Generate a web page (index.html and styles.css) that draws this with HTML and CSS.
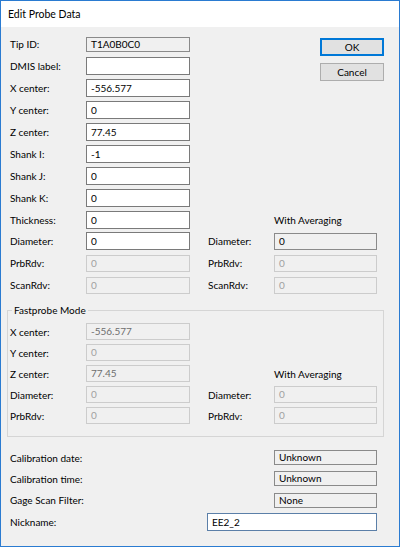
FILE: index.html
```html
<!DOCTYPE html>
<html>
<head>
<meta charset="utf-8">
<link rel="stylesheet" href="styles.css">
</head>
<body>
<div class="window">
  <div class="titlebar">Edit Probe Data</div>
  <div class="grid top">
    <div class="lbl">Tip ID:</div><div class="box static">T1A0B0C0</div>
    <div class="buttons">
      <div class="btn default">OK</div>
      <div class="btn">Cancel</div>
    </div>
    <div class="lbl">DMIS label:</div><div class="box edit"></div>
    <div class="lbl">X center:</div><div class="box edit">-556.577</div>
    <div class="lbl">Y center:</div><div class="box edit">0</div>
    <div class="lbl">Z center:</div><div class="box edit">77.45</div>
    <div class="lbl">Shank I:</div><div class="box edit">-1</div>
    <div class="lbl">Shank J:</div><div class="box edit">0</div>
    <div class="lbl">Shank K:</div><div class="box edit">0</div>
    <div class="lbl">Thickness:</div><div class="box edit">0</div>
    <div class="caption">With Averaging</div>
    <div class="lbl">Diameter:</div><div class="box edit">0</div>
    <div class="lbl c4">Diameter:</div><div class="box static tall">0</div>
    <div class="lbl">PrbRdv:</div><div class="box disabled">0</div>
    <div class="lbl c4">PrbRdv:</div><div class="box disabled">0</div>
    <div class="lbl">ScanRdv:</div><div class="box disabled">0</div>
    <div class="lbl c4">ScanRdv:</div><div class="box disabled">0</div>
  </div>

  <fieldset class="group">
    <legend>Fastprobe Mode</legend>
    <div class="grid fast">
      <div class="lbl">X center:</div><div class="box ro">-556.577</div>
      <div class="lbl">Y center:</div><div class="box disabled">0</div>
      <div class="lbl">Z center:</div><div class="box ro">77.45</div>
      <div class="caption">With Averaging</div>
      <div class="lbl">Diameter:</div><div class="box disabled">0</div>
      <div class="lbl c4">Diameter:</div><div class="box disabled">0</div>
      <div class="lbl">PrbRdv:</div><div class="box disabled">0</div>
      <div class="lbl c4">PrbRdv:</div><div class="box disabled">0</div>
    </div>
  </fieldset>

  <div class="grid bottom">
    <div class="lbl wide">Calibration date:</div><div class="box static c5">Unknown</div>
    <div class="lbl wide">Calibration time:</div><div class="box static c5">Unknown</div>
    <div class="lbl wide">Gage Scan Filter:</div><div class="box static c5">None</div>
    <div class="lbl wide">Nickname:</div><div class="box nick">EE2_2</div>
  </div>
</div>
</body>
</html>
```

FILE: styles.css
```css
* { box-sizing: border-box; }
html, body { margin: 0; padding: 0; background: #f0f0f0; }
body {
  font-family: Lato, "Liberation Sans", sans-serif;
  font-size: 10px;
  color: #000;
}
.window {
  width: 400px;
  height: 547px;
  border: 1px solid #2a7bd1;
  background: #f0f0f0;
  overflow: hidden;
}
.titlebar {
  height: 26px;
  line-height: 26px;
  background: #fff;
  padding-left: 7px;
  font-size: 10.5px;
}
.grid {
  display: grid;
  grid-template-columns: 76px 104px 18px 66px 103px 7px;
  padding-left: 9px;
  align-items: center;
}
.top {
  padding-top: 6px;
  grid-template-rows: repeat(8, 22px) 21px repeat(3, 22px);
}
.lbl { grid-column: 1; white-space: nowrap; }
.lbl.c4 { grid-column: 4; }
.lbl.wide { grid-column: 1 / 4; }
.box {
  grid-column: 2;
  height: 18px;
  line-height: 16px;
  padding-left: 4px;
  white-space: nowrap;
  overflow: hidden;
}
.lbl.c4 + .box, .box.c5 { grid-column: 5; }
.edit { background: #fff; border: 1px solid #7a7a7a; }
.static { background: #f0f0f0; border: 1px solid #8a8a8a; height: 15px; line-height: 13px; }
.static.tall { height: 17px; line-height: 15px; }
.disabled { background: #f0f0f0; border: 1px solid #cccccc; color: #a0a0a0; height: 17px; line-height: 15px; }
.ro { background: #f0f0f0; border: 1px solid #cccccc; color: #6d6d6d; height: 17px; line-height: 15px; }
.caption { grid-column: 5 / 7; }
.buttons {
  grid-column: 4 / 7;
  grid-row: 1 / 4;
  align-self: start;
  justify-self: end;
  margin-top: 5px;
  display: flex;
  flex-direction: column;
  gap: 7px;
}
.btn {
  width: 64px;
  height: 18px;
  line-height: 16px;
  text-align: center;
  background: #e1e1e1;
  border: 1px solid #adadad;
}
.btn.default { border: 2px solid #0078d7; line-height: 14px; }
.group {
  margin: 7px 0 0 6px;
  width: 377px;
  padding: 4px 0 10px 2px;
  border: 1px solid #d5d5d5;
  min-width: 0;
}
.group legend {
  padding: 0 2px;
  margin-left: 2px;
  line-height: 14px;
  height: 14px;
}
.fast {
  padding-left: 0;
  grid-template-rows: repeat(5, 21px);
}
.bottom {
  padding-top: 10px;
  grid-template-rows: 21px 21px 22px 22px;
}
.nick {
  grid-column: 4 / 6;
  margin-left: -1px;
  background: #fff;
  border: 1px solid #5b7fa8;
}
```
